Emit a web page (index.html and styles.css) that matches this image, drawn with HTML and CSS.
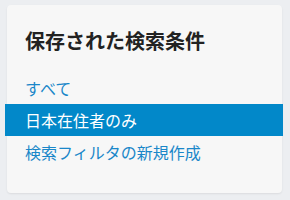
FILE: index.html
```html
<!DOCTYPE html>
<html lang="ja">
<head>
<meta charset="utf-8">
<link rel="stylesheet" href="styles.css">
</head>
<body>
<div class="card">
  <h2 class="title">保存された検索条件</h2>
  <ul class="list">
    <li class="item">すべて</li>
    <li class="item active">日本在住者のみ</li>
    <li class="item">検索フィルタの新規作成</li>
  </ul>
</div>
</body>
</html>
```
FILE: styles.css
```css
html, body {
  margin: 0;
  padding: 0;
}
body {
  background: #eceef1;
  font-family: "Noto Sans CJK JP", "Noto Sans", sans-serif;
  padding: 5px 8px 7px 7px;
  width: 290px;
  height: 200px;
  box-sizing: border-box;
}
.card {
  background: #f7f7f7;
  border-radius: 4px;
  box-shadow: 0 1px 2px rgba(0, 0, 0, 0.08);
  padding: 24px 0 25px 0;
  height: 188px;
  box-sizing: border-box;
}
.title {
  margin: 0 0 19px 0;
  padding: 0 18px;
  font-size: 20px;
  line-height: 24px;
  font-weight: 700;
  color: #222;
}
.list {
  list-style: none;
  margin: 0;
  padding: 0;
}
.item {
  height: 32px;
  line-height: 32px;
  padding: 0 18px;
  font-size: 16px;
  color: #1a87c9;
}
.item.active {
  background: #0288c9;
  color: #fff;
  margin: 0 -1px 0 -2px;
  padding-left: 20px;
}
```
